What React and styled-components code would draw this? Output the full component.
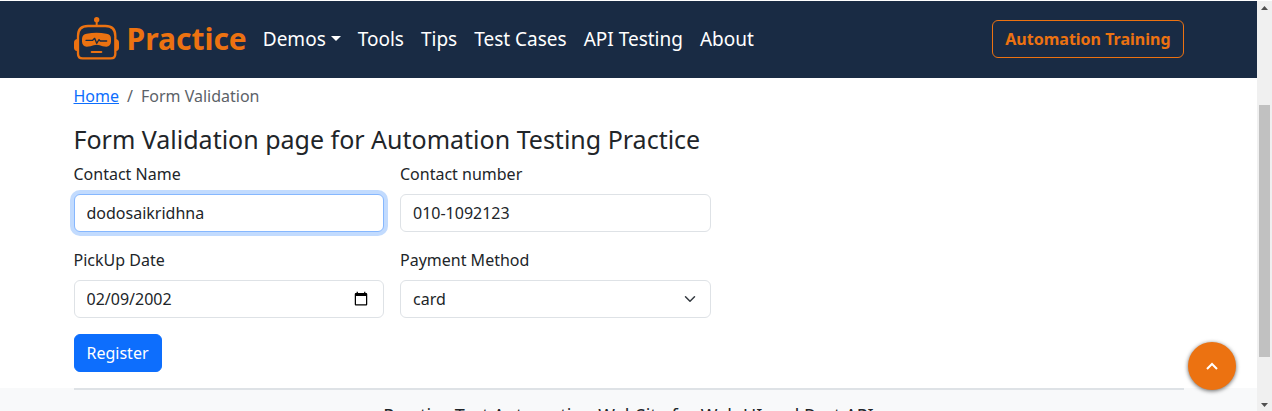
import React from 'react';
import styled, { createGlobalStyle, css } from 'styled-components';

const GlobalStyle = createGlobalStyle`
  *, *::before, *::after { box-sizing: border-box; }
  body {
    margin: 0;
    background: #fff;
    color: #212529;
    font-family: "Noto Sans", "Liberation Sans", sans-serif;
    font-size: 16px;
    line-height: 24px;
  }
`;

const Screen = styled.div`
  display: flex;
  height: 100vh;
  padding-top: 1px;
  overflow: hidden;
`;

const Page = styled.div`
  flex: 1;
  min-width: 0;
  overflow: hidden;
`;

const Container = styled.div`
  width: 100%;
  max-width: 1140px;
  margin: 0 auto;
  padding: 0 15px;
`;

const Header = styled.header`
  background: #192b44;
`;

const HeaderBar = styled(Container)`
  display: flex;
  align-items: center;
  min-height: 77px;
  padding-bottom: 2px;
`;

const Brand = styled.a`
  display: flex;
  align-items: center;
  gap: 8px;
  margin-right: 8px;
  color: #ec7211;
  font-size: 30px;
  font-weight: 700;
  line-height: 45px;
  text-decoration: none;
`;

const Nav = styled.nav`
  display: flex;
  flex: 1;
  gap: 1px;
`;

const NavLink = styled.a`
  display: flex;
  align-items: center;
  padding: 8px;
  color: #fff;
  font-size: 19px;
  line-height: 28px;
  white-space: nowrap;
  text-decoration: none;
`;

const Caret = styled.span`
  margin-left: 5px;
  border-top: 5px solid currentColor;
  border-right: 5px solid transparent;
  border-left: 5px solid transparent;
`;

const Button = styled.button`
  padding: 6px 12px;
  border: 1px solid ${(p) => (p.$outline ? '#ec7211' : '#0d6efd')};
  border-radius: 6px;
  background: ${(p) => (p.$outline ? 'transparent' : '#0d6efd')};
  color: ${(p) => (p.$outline ? '#ec7211' : '#fff')};
  font: inherit;
  font-weight: ${(p) => (p.$outline ? 700 : 400)};
  white-space: nowrap;
  cursor: pointer;
`;

const Breadcrumb = styled.ol`
  display: flex;
  margin: 0;
  padding: 6px 0 16px;
  list-style: none;
  color: #5c6268;
`;

const Crumb = styled.li`
  & + &::before {
    content: "/";
    padding: 0 8px;
  }
`;

const CrumbLink = styled.a`
  color: #0d6efd;
`;

const Title = styled.h1`
  margin: 0 0 8px;
  font-size: 25px;
  font-weight: 400;
  line-height: 30px;
`;

const Form = styled.form`
  display: grid;
  grid-template-columns: 1fr 1fr;
  gap: 16px;
  max-width: 637px;
  padding-bottom: 16px;
`;

const Field = styled.div`
  display: flex;
  flex-direction: column;
  gap: 8px;
  min-width: 0;
`;

const controlStyle = css`
  width: 100%;
  height: 38px;
  padding: 6px 12px;
  border: 1px solid #dee2e6;
  border-radius: 6px;
  outline: 0;
  background: #fff;
  color: #212529;
  font: inherit;
`;

const Input = styled.input`
  ${controlStyle}
  ${(p) => p.$active && css`
    border-color: #86b7fe;
    box-shadow: 0 0 0 4px rgba(13, 110, 253, 0.25);
  `}
  &::-webkit-datetime-edit-month-field,
  &::-webkit-datetime-edit-day-field,
  &::-webkit-datetime-edit-year-field {
    padding: 0;
  }
`;

const SelectBox = styled.div`
  display: grid;
  align-items: center;
  & > * { grid-area: 1 / 1; }
  & > svg {
    justify-self: end;
    margin-right: 13px;
    pointer-events: none;
  }
`;

const Select = styled.select`
  ${controlStyle}
  appearance: none;
`;

const Footer = styled.footer`
  background: #f8f9fa;
`;

const FooterText = styled.p`
  margin: 0;
  padding: 12px 0 24px;
  border-top: 2px solid #dee2e6;
  font-size: 18px;
  line-height: 27px;
  text-align: center;
`;

const ToTop = styled.button`
  position: fixed;
  right: 36px;
  bottom: 21px;
  display: flex;
  align-items: center;
  justify-content: center;
  width: 48px;
  height: 48px;
  padding: 0;
  border: 0;
  border-radius: 50%;
  background: #ec7211;
  box-shadow: 0 1px 4px rgba(0, 0, 0, 0.6);
  cursor: pointer;
`;

const Scrollbar = styled.div`
  display: flex;
  flex-direction: column;
  align-items: center;
  width: 15px;
  padding: 5px 0 4px;
  background: #f0f0f0;
`;

const Arrow = styled.svg`
  flex: none;
  width: 7px;
  height: 4px;
  fill: #505050;
`;

const Track = styled.div`
  display: flex;
  flex: 1;
  flex-direction: column;
  width: 11px;
  padding: 95px 0 46px;
`;

const Thumb = styled.div`
  flex: 1;
  background: #c1c1c1;
`;

function RobotLogo() {
  return (
    <svg width="45" height="43" viewBox="42 51 135 129" fill="none" stroke="#ec7211" aria-hidden="true">
      <circle cx="110" cy="59" r="8" fill="#ec7211" stroke="none" />
      <path d="M110 64V77" strokeWidth="6" />
      <path d="M84 78H136Q166 78 166 108V161Q166 175 152 175H68Q54 175 54 161V108Q54 78 84 78Z" strokeWidth="7" />
      <path d="M51 117Q42 119 42 128V143Q42 151 51 153ZM168 117Q177 119 177 128V143Q177 151 168 153Z" fill="#ec7211" stroke="none" />
      <path d="M80 101Q110 96 139 101Q153 102 153 116V125Q152 138 139 140Q127 140 119 136Q110 132 101 136Q93 140 80 140Q67 138 66 125V116Q67 102 80 101Z" fill="#ec7211" stroke="none" />
      <path d="M78 121H98L104 115L110 130L117 119L121 123H140" stroke="#192b44" strokeWidth="4" strokeLinejoin="round" strokeLinecap="round" />
      <path d="M95 156H124" strokeWidth="6" strokeLinecap="round" />
    </svg>
  );
}

const links = ['Tools', 'Tips', 'Test Cases', 'API Testing', 'About'];

export default function App() {
  return (
    <>
      <GlobalStyle />
      <Screen>
        <Page>
          <Header>
            <HeaderBar>
              <Brand href="#home"><RobotLogo />Practice</Brand>
              <Nav>
                <NavLink href="#demos">Demos<Caret /></NavLink>
                {links.map((l) => <NavLink key={l} href="#nav">{l}</NavLink>)}
              </Nav>
              <Button type="button" $outline>Automation Training</Button>
            </HeaderBar>
          </Header>
          <Container as="main">
            <nav aria-label="Breadcrumb">
              <Breadcrumb>
                <Crumb><CrumbLink href="#home">Home</CrumbLink></Crumb>
                <Crumb>Form Validation</Crumb>
              </Breadcrumb>
            </nav>
            <Title>Form Validation page for Automation Testing Practice</Title>
            <Form onSubmit={(e) => e.preventDefault()}>
              <Field>
                <label htmlFor="name">Contact Name</label>
                <Input id="name" type="text" defaultValue="dodosaikridhna" $active />
              </Field>
              <Field>
                <label htmlFor="number">Contact number</label>
                <Input id="number" type="tel" defaultValue="010-1092123" />
              </Field>
              <Field>
                <label htmlFor="date">PickUp Date</label>
                <Input id="date" type="date" defaultValue="2002-02-09" />
              </Field>
              <Field>
                <label htmlFor="payment">Payment Method</label>
                <SelectBox>
                  <Select id="payment" defaultValue="card">
                    <option>card</option>
                    <option>cash on delivery</option>
                  </Select>
                  <svg width="16" height="12" viewBox="0 0 16 16" fill="none" aria-hidden="true">
                    <path d="m2 5 6 6 6-6" stroke="#343a40" strokeWidth="2" strokeLinecap="round" strokeLinejoin="round" />
                  </svg>
                </SelectBox>
              </Field>
              <div><Button type="submit">Register</Button></div>
            </Form>
          </Container>
          <Footer>
            <Container>
              <FooterText>Practice Test Automation WebSite for Web UI and Rest API</FooterText>
            </Container>
          </Footer>
        </Page>
        <Scrollbar aria-hidden="true">
          <Arrow viewBox="0 0 7 4"><path d="M0 4 3.5 0 7 4Z" /></Arrow>
          <Track><Thumb /></Track>
          <Arrow viewBox="0 0 7 4"><path d="M0 0 3.5 4 7 0Z" /></Arrow>
        </Scrollbar>
      </Screen>
      <ToTop type="button" aria-label="Back to top">
        <svg width="12" height="8" viewBox="0 0 12 8" fill="none" aria-hidden="true">
          <path d="m1 7 5-5 5 5" stroke="#fff" strokeWidth="2" />
        </svg>
      </ToTop>
    </>
  );
}
